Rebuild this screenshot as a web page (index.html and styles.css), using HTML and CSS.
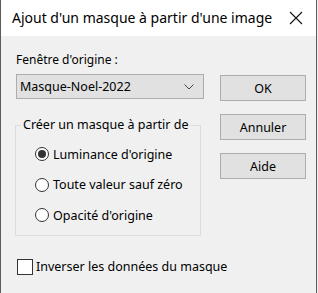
FILE: index.html
```html
<!DOCTYPE html>
<html lang="fr">
<head>
    <meta charset="UTF-8">
    <title>Ajout d'un masque à partir d'une image</title>
    <link rel="stylesheet" href="styles.css">
</head>
<body>
    <div class="window">
        <div class="titlebar">
            <span class="title">Ajout d'un masque à partir d'une image</span>
            <svg class="close" width="14" height="14" viewBox="0 0 14 14">
                <path d="M1 1 L13 13 M13 1 L1 13" stroke="#111" stroke-width="1.1" fill="none"/>
            </svg>
        </div>
        <div class="content">
            <div class="main">
                <div class="left">
                    <label class="field-label">Fenêtre d'origine :</label>
                    <div class="select">
                        <span>Masque-Noel-2022</span>
                        <svg width="10" height="6" viewBox="0 0 10 6">
                            <path d="M0.5 0.5 L5 5 L9.5 0.5" stroke="#444" stroke-width="1" fill="none"/>
                        </svg>
                    </div>
                    <fieldset class="group">
                        <legend>Créer un masque à partir de</legend>
                        <div class="radio checked"><span class="dot"></span>Luminance d'origine</div>
                        <div class="radio"><span class="dot"></span>Toute valeur sauf zéro</div>
                        <div class="radio"><span class="dot"></span>Opacité d'origine</div>
                    </fieldset>
                </div>
                <div class="buttons">
                    <button class="btn">OK</button>
                    <button class="btn">Annuler</button>
                    <button class="btn">Aide</button>
                </div>
            </div>
            <div class="check"><span class="box"></span>Inverser les données du masque</div>
        </div>
    </div>
</body>
</html>
```

FILE: styles.css
```css
body {
    margin: 0;
    padding: 0;
    font-family: "Noto Sans", "Open Sans", sans-serif;
    font-size: 12px;
    color: #000;
    background: #f0f0f0;
}

.window {
    width: 315px;
    height: 293px;
    border-left: 1px solid #5c5c5c;
    border-right: 1px solid #5c5c5c;
    background: #f0f0f0;
    overflow: hidden;
}

.titlebar {
    height: 36px;
    background: #fff;
    display: flex;
    align-items: center;
    justify-content: space-between;
    padding: 0 13px 0 11px;
}

.title {
    font-size: 14px;
    color: #000;
    margin-top: -1px;
}

.close {
    display: block;
}

.content {
    padding: 16px 0 0 15px;
}

.main {
    display: flex;
}

.left {
    width: 188px;
}

.field-label {
    display: block;
    line-height: 16px;
}

.select {
    margin: 6px 0 0 0;
    height: 23px;
    border: 1px solid #adadad;
    background: #e1e1e1;
    display: flex;
    align-items: center;
    justify-content: space-between;
    padding: 0 9px 0 3px;
    font-size: 12.5px;
}

.group {
    margin: 19px 0 0 -1px;
    width: 186px;
    height: 118px;
    box-sizing: border-box;
    border: 1px solid #dcdcdc;
    padding: 7px 0 0 19px;
    min-width: 0;
}

.group legend {
    padding: 0 2px;
    margin-left: -14px;
    line-height: 14px;
    white-space: nowrap;
    font-size: 12.5px;
}

.radio {
    display: flex;
    align-items: center;
    height: 30.5px;
    font-size: 12.5px;
}

.radio .dot {
    width: 14px;
    height: 14px;
    border: 1px solid #333;
    border-radius: 50%;
    background: #fff;
    margin-right: 4px;
    box-sizing: border-box;
    position: relative;
}

.radio.checked .dot::after {
    content: "";
    position: absolute;
    left: 2px;
    top: 2px;
    width: 8px;
    height: 8px;
    border-radius: 50%;
    background: #333;
}

.buttons {
    display: flex;
    flex-direction: column;
    gap: 13px;
    margin: 23px 0 0 16px;
}

.btn {
    width: 86px;
    height: 26px;
    border: 1px solid #adadad;
    background: #e1e1e1;
    font-family: "Noto Sans", "Open Sans", sans-serif;
    font-size: 12.5px;
    color: #000;
    padding: 0;
}

.check {
    display: flex;
    align-items: center;
    margin-top: 22px;
    margin-left: 1px;
    font-size: 12.5px;
}

.check .box {
    width: 16px;
    height: 16px;
    box-sizing: border-box;
    border: 1px solid #333;
    background: #fff;
    margin-right: 3px;
}
```
